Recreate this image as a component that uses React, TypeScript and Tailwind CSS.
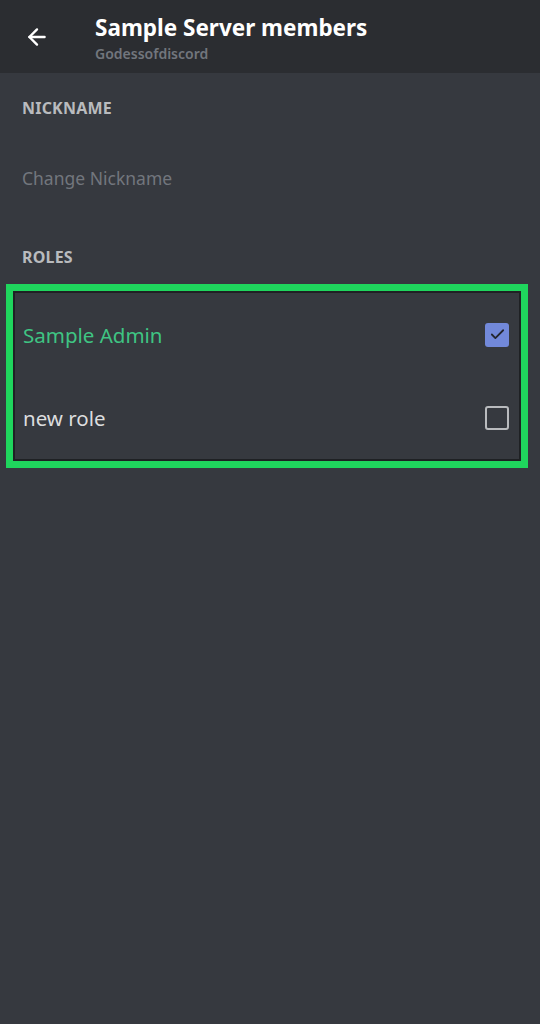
import { ArrowLeft, Check } from "lucide-react";

const roles = [
  { id: "admin", name: "Sample Admin", color: "text-[#3fc483]", checked: true },
  { id: "new", name: "new role", color: "text-[#dcddde]", checked: false },
];

export default function App() {
  return (
    <div className="flex min-h-[1024px] w-[540px] flex-col bg-[#36393f] font-['Noto_Sans',sans-serif]">
      <header className="flex h-[73px] items-center bg-[#2b2d31]">
        <button type="button" className="flex w-[95px] items-center pl-[24px] text-white">
          <ArrowLeft className="h-[26px] w-[26px]" strokeWidth={2.2} />
        </button>
        <div className="flex flex-col pt-[4px]">
          <h1 className="text-[22.5px] font-bold leading-[28px] text-white">Sample Server members</h1>
          <p className="mt-[3px] text-[14px] font-semibold leading-[18px] text-[#72767d]">Godessofdiscord</p>
        </div>
      </header>

      <section className="px-[22px] pt-[24px]">
        <h2 className="text-[16px] font-bold leading-[22px] tracking-[0.2px] text-[#b9bbbe]">NICKNAME</h2>
        <p className="mt-[47px] text-[17.5px] leading-[24px] text-[#72767d]">Change Nickname</p>
        <h2 className="mt-[56px] text-[16px] font-bold leading-[22px] tracking-[0.2px] text-[#b9bbbe]">ROLES</h2>
      </section>

      <div className="mx-[6px] mt-[16px] w-[522px] border-[7px] border-[#1fd65d]">
        <ul className="border-2 border-[#1f2124]">
          {roles.map((role) => (
            <li key={role.id} className="flex h-[83px] items-center justify-between pl-[8px] pr-[10px]">
              <span className={`text-[20.5px] leading-[26px] ${role.color}`}>{role.name}</span>
              {role.checked ? (
                <span className="flex h-[24px] w-[24px] items-center justify-center rounded-[3px] bg-[#7289da]">
                  <Check className="h-[17px] w-[17px] text-[#23262e]" strokeWidth={2.5} />
                </span>
              ) : (
                <span className="h-[24px] w-[24px] rounded-[3px] border-2 border-[#b9bbbe]" />
              )}
            </li>
          ))}
        </ul>
      </div>
    </div>
  );
}
